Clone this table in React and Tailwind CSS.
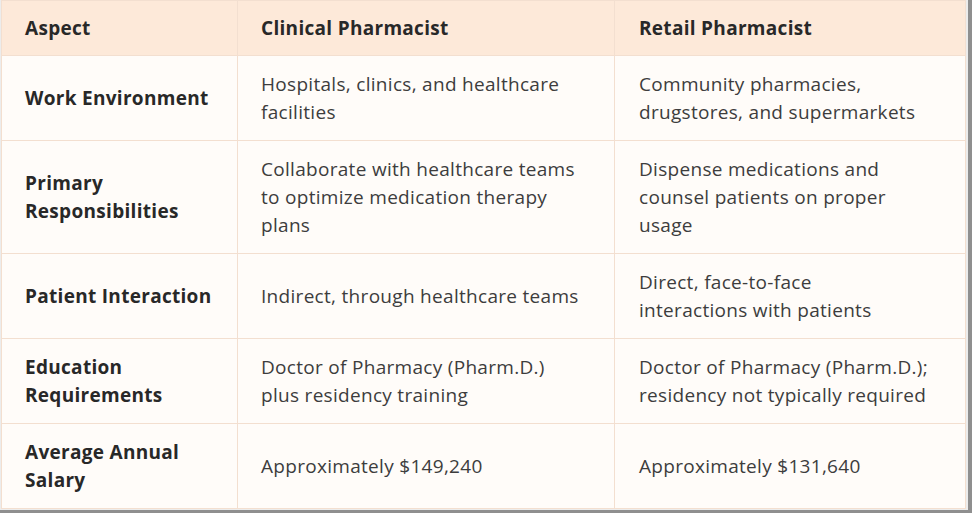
const rows = [
  [["Work Environment"], ["Hospitals, clinics, and healthcare", "facilities"], ["Community pharmacies,", "drugstores, and supermarkets"]],
  [["Primary", "Responsibilities"], ["Collaborate with healthcare teams", "to optimize medication therapy", "plans"], ["Dispense medications and", "counsel patients on proper", "usage"]],
  [["Patient Interaction"], ["Indirect, through healthcare teams"], ["Direct, face-to-face", "interactions with patients"]],
  [["Education", "Requirements"], ["Doctor of Pharmacy (Pharm.D.)", "plus residency training"], ["Doctor of Pharmacy (Pharm.D.);", "residency not typically required"]],
  [["Average Annual", "Salary"], ["Approximately $149,240"], ["Approximately $131,640"]],
]

function Lines({ lines }) {
  return lines.map((l, i) => (
    <span key={i} className="block whitespace-nowrap">{l}</span>
  ))
}

export default function App() {
  return (
    <div className="w-[972px] h-[513px] bg-[#8f8f8f] overflow-hidden" style={{ fontFamily: "'Open Sans', sans-serif" }}>
      <div className="w-[968px] h-[510px] bg-[#ececec] pl-px">
        <table className="w-[965px] border-collapse table-fixed bg-[#fffcf9] text-[19px] leading-[28px] tracking-[0.3px] text-[#3d3d3d]">
          <colgroup>
            <col className="w-[236px]" />
            <col className="w-[377px]" />
            <col />
          </colgroup>
          <thead>
            <tr className="bg-[#fde9d9] h-[55px]">
              <th className="border border-[#f3dfd0] px-[23px] text-left font-bold text-[#282828]">Aspect</th>
              <th className="border border-[#f3dfd0] px-[23px] text-left font-bold text-[#282828]">Clinical Pharmacist</th>
              <th className="border border-[#f3dfd0] px-[24px] text-left font-bold text-[#282828]">Retail Pharmacist</th>
            </tr>
          </thead>
          <tbody>
            {rows.map((r, i) => (
              <tr key={i} className={i === 1 ? "h-[112px]" : "h-[85px]"}>
                <td className="border border-[#f3dfd0] px-[23px] py-[14px] align-middle font-bold text-[#282828]"><Lines lines={r[0]} /></td>
                <td className="border border-[#f3dfd0] px-[23px] py-[14px] align-middle"><Lines lines={r[1]} /></td>
                <td className="border border-[#f3dfd0] px-[24px] py-[14px] align-middle"><Lines lines={r[2]} /></td>
              </tr>
            ))}
          </tbody>
        </table>
      </div>
    </div>
  )
}
